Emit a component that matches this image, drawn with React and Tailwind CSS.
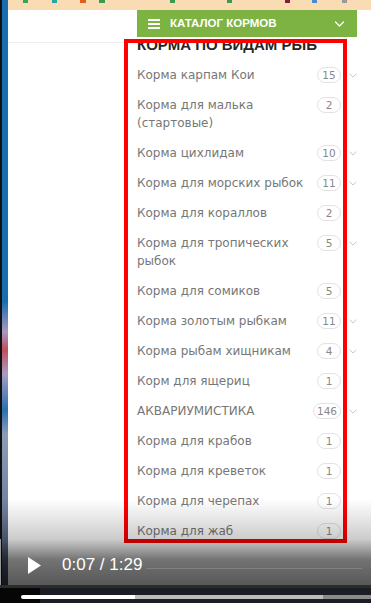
import React from "react";

const items = [
  { t: "Корма карпам Кои", n: "15", c: true },
  { t: "Корма для малька (стартовые)", n: "2" },
  { t: "Корма цихлидам", n: "10", c: true },
  { t: "Корма для морских рыбок", n: "11", c: true },
  { t: "Корма для кораллов", n: "2" },
  { t: "Корма для тропических рыбок", n: "5", c: true },
  { t: "Корма для сомиков", n: "5" },
  { t: "Корма золотым рыбкам", n: "11", c: true },
  { t: "Корма рыбам хищникам", n: "4", c: true },
  { t: "Корм для ящериц", n: "1" },
  { t: "АКВАРИУМИСТИКА", n: "146", c: true },
  { t: "Корма для крабов", n: "1" },
  { t: "Корма для креветок", n: "1" },
  { t: "Корма для черепах", n: "1" },
  { t: "Корма для жаб", n: "1" },
];

function Chevron({ className, stroke }) {
  return (
    <svg className={className} viewBox="0 0 10 6" fill="none">
      <polyline points="1,1 5,5 9,1" stroke={stroke} strokeWidth="1.2" strokeLinecap="round" strokeLinejoin="round" />
    </svg>
  );
}

export default function App() {
  return (
    <div className="relative w-[371px] h-[603px] overflow-hidden bg-white" style={{ fontFamily: "'DejaVu Sans', sans-serif" }}>
      <div className="flex h-full">
        {/* left edge strip */}
        <div className="flex w-[8px] shrink-0">
          <div className="w-[2px] bg-[#111]" />
          <div className="w-[6px] bg-[linear-gradient(to_bottom,#1a6cb0_0%,#1a6cb0_50%,#a69ac0_55%,#c0505e_58%,#a89cc4_62%,#2a70b0_68%,#8e9cb8_72%,#6f7f9e_85%,#2a2f40_100%)]" />
        </div>

        <div className="flex flex-1 flex-col">
          {/* peach toolbar */}
          <div className="flex h-[10px] items-start bg-[#f9dbb4]">
            <div className="ml-[15px] h-[3px] w-[5px] bg-[#3aa35a]" />
            <div className="ml-[24px] h-[3px] w-[5px] bg-[#2aa6a0]" />
            <div className="ml-[23px] h-[3px] w-[6px] bg-[#e0601a]" />
            <div className="ml-[13px] h-[3px] w-[6px] bg-[#3a9a50]" />
            <div className="ml-[65px] h-[3px] w-[5px] bg-[#3a9a50]" />
            <div className="ml-[52px] h-[3px] w-[5px] bg-[#3a9a50]" />
            <div className="ml-[53px] h-[3px] w-[5px] bg-[#8a1a3a]" />
            <div className="ml-[22px] h-[3px] w-[5px] bg-[#4a8ad0]" />
            <div className="ml-[25px] h-[3px] w-[5px] bg-[#9a9a9a]" />
          </div>

          {/* green catalog bar */}
          <div className="pl-[129px]">
            <div className="flex h-[27px] w-[220px] items-center bg-[#7cb342] pl-[11px] pr-[12px]">
              <div className="flex w-[12px] flex-col gap-[2px]">
                <div className="h-[2px] bg-white" />
                <div className="h-[2px] bg-white" />
                <div className="h-[2px] bg-white" />
              </div>
              <span className="ml-[10px] text-[11.5px] font-bold text-white" style={{ fontFamily: "'Liberation Sans', Arial, sans-serif" }}>
                КАТАЛОГ КОРМОВ
              </span>
              <Chevron className="ml-auto h-[6px] w-[11px]" stroke="#ffffff" />
            </div>
          </div>

          {/* header area */}
          <div className="flex h-[23px]">
            <div className="h-[6px] w-[116px] border-b border-[#ececec]" />
            <div className="ml-[13px] mt-[6px] h-[17px] overflow-hidden">
              <div className="-mt-[6px] text-[15px] font-bold leading-[15px] text-[#262626]" style={{ fontFamily: "'Liberation Sans', Arial, sans-serif" }}>
                КОРМА ПО ВИДАМ РЫБ
              </div>
            </div>
          </div>

          {/* list */}
          <div className="flex flex-col pl-[129px]">
            {items.map((it) => (
              <div key={it.t} className="flex items-start py-[6px]">
                <div className="w-[176px] text-[12px] leading-[18px] text-[#777]">{it.t}</div>
                <div className="flex w-[28px] justify-end pt-[1px]">
                  <div className="h-[16px] min-w-[24px] rounded-full border border-[#e2e2e2] px-[3px] text-center text-[10.5px] leading-[14px] text-[#888]">
                    {it.n}
                  </div>
                </div>
                <div className="ml-[8px] flex w-[8px] pt-[7px]">
                  {it.c && <Chevron className="h-[5px] w-[8px]" stroke="#c4c4c4" />}
                </div>
              </div>
            ))}
          </div>
        </div>
      </div>

      {/* red annotation rectangle */}
      <div className="absolute left-[124px] top-[39px] h-[504px] w-[223px] border-[4px] border-[#f00]" />

      {/* video controls overlay */}
      <div className="absolute inset-x-0 bottom-0 flex flex-col">
        <div className="h-[40px] bg-[linear-gradient(to_bottom,rgba(0,0,0,0)_0%,rgba(0,0,0,0.2)_100%)]" />
        <div className="relative flex h-[46px] items-center border-l border-[#9a9a9a] bg-[linear-gradient(to_bottom,rgba(0,0,0,0.2)_0%,rgba(0,0,0,0.55)_45%,rgba(0,0,0,0.66)_100%)] pl-[27px] pt-[6px]">
          <svg className="h-[17px] w-[13px]" viewBox="0 0 13 17">
            <polygon points="0,0 13,8.5 0,17" fill="#fff" />
          </svg>
          <span className="ml-[21px] text-[17px] leading-[20px] text-white" style={{ fontFamily: "'Liberation Sans', Arial, sans-serif" }}>
            0:07 / 1:29
          </span>
          <div className="ml-[4px] mt-[6px] h-px flex-1 bg-[rgba(255,255,255,0.15)] mr-[9px]" />
        </div>
        <div className="h-[3px] bg-[#2a2c30]" />
        <div className="flex h-[15px] bg-[#1b1e24]">
          <div className="w-[40px] shrink-0 bg-[#060606]" />
        </div>
        <div className="absolute bottom-[4px] left-[21px] right-0 flex h-[4px]">
          <div className="w-[114px] rounded-l-full bg-white" />
          <div className="w-[188px] bg-[#bdbdbd]" />
          <div className="flex-1 bg-[#8a8a8a]" />
        </div>
      </div>
    </div>
  );
}
